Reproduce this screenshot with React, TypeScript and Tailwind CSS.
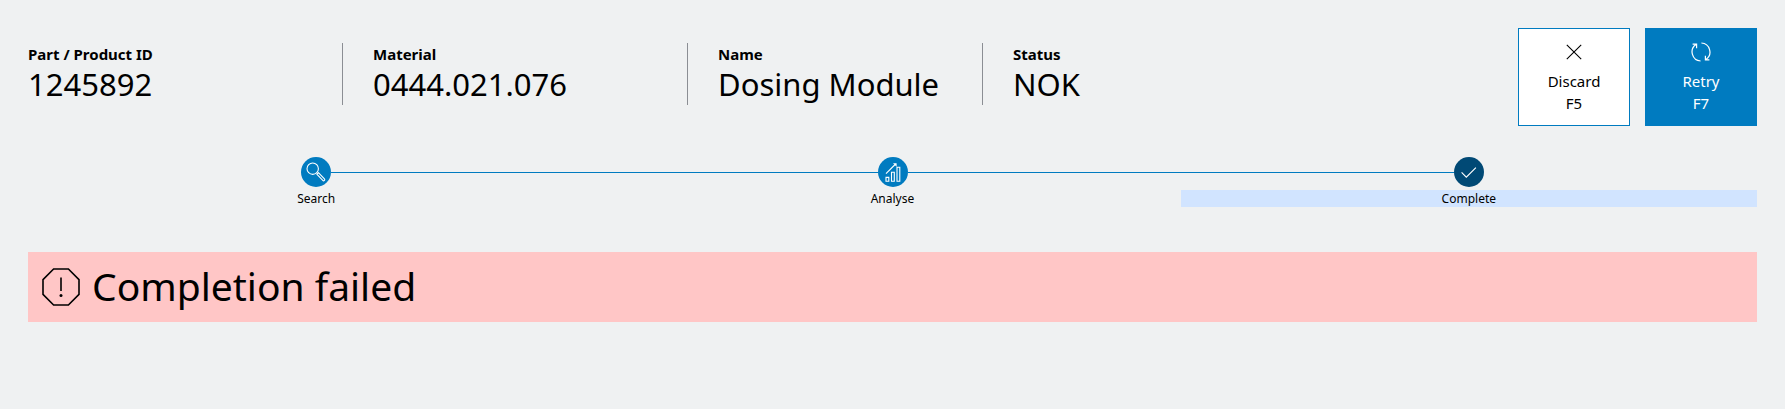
import React from 'react';

const fields = [
  { label: 'Part / Product ID', value: '1245892', className: 'w-[314px] pr-8' },
  { label: 'Material', value: '0444.021.076', className: 'w-[345px] border-l border-[#8b8e94] px-[30px]' },
  { label: 'Name', value: 'Dosing Module', className: 'w-[295px] border-l border-[#8b8e94] px-[30px]' },
  { label: 'Status', value: 'NOK', className: 'border-l border-[#8b8e94] px-[30px]' },
];

function SearchIcon() {
  return (
    <svg viewBox="0 0 30 30" className="h-full w-full" fill="none" stroke="white" strokeWidth="1.1">
      <circle cx="11.7" cy="11.7" r="5.7" />
      <path d="M15.8 17.2l1.6-1.6 6 6.2a1.1 1.1 0 0 1-1.6 1.6z" strokeLinejoin="round" />
    </svg>
  );
}

function AnalyseIcon() {
  return (
    <svg viewBox="0 0 30 30" className="h-full w-full" fill="none" stroke="white" strokeWidth="1.1">
      <path d="M8 20.4h2.8v3.8H8zM13.5 15.2h2.8v9h-2.8zM19 10.2h2.8v14H19z" />
      <path d="M8 16.6L17.6 7" />
      <path d="M15 6.2h3.6v3.6z" fill="white" stroke="none" />
    </svg>
  );
}

function CompleteIcon() {
  return (
    <svg viewBox="0 0 30 30" className="h-full w-full" fill="none" stroke="white" strokeWidth="1.1">
      <path d="M7.6 15.4l4.7 4.8 9.6-9.6" />
    </svg>
  );
}

const steps = [
  { label: 'Search', icon: <SearchIcon />, active: false },
  { label: 'Analyse', icon: <AnalyseIcon />, active: false },
  { label: 'Complete', icon: <CompleteIcon />, active: true },
];

export default function App() {
  return (
    <div className="min-h-screen bg-[#eff1f2] px-7 pt-7 pb-20 font-['Noto_Sans','Open_Sans',sans-serif] text-black">
      {/* Part details and actions */}
      <header className="flex items-start justify-between">
        <dl className="mt-[15px] flex">
          {fields.map((field) => (
            <div key={field.label} className={`h-[62px] ${field.className}`}>
              <dt className="text-[15px] leading-[22px] font-bold whitespace-nowrap">{field.label}</dt>
              <dd className="text-[31px] leading-[38px] whitespace-nowrap">{field.value}</dd>
            </div>
          ))}
        </dl>

        <div className="flex gap-[15px]">
          <button className="flex h-[98px] w-28 flex-col items-center border border-[#007bc0] bg-white pt-[13px] text-[15px] leading-[22px]">
            <svg viewBox="0 0 20 20" className="mb-2 h-5 w-5" fill="none" stroke="currentColor" strokeWidth="1.1">
              <path d="M2.8 2.8l14.4 14.4M17.2 2.8L2.8 17.2" />
            </svg>
            <span>Discard</span>
            <span>F5</span>
          </button>
          <button className="flex h-[98px] w-28 flex-col items-center border border-[#007bc0] bg-[#007bc0] pt-[13px] text-[15px] leading-[22px] text-white">
            <svg viewBox="0 0 20 20" className="mb-2 h-5 w-5" fill="none" stroke="currentColor" strokeWidth="1.2">
              <path d="M9.6 19A9 9 0 0 1 5 2.6M1.6 2.2h4v4M10.4 1A9 9 0 0 1 15 17.4M18.4 17.8h-4v-4" />
            </svg>
            <span>Retry</span>
            <span>F7</span>
          </button>
        </div>
      </header>

      {/* Progress */}
      <ol className="mt-[31px] grid grid-cols-3">
        {steps.map((step, index) => (
          <li key={step.label} aria-current={step.active ? 'step' : undefined}>
            <div className="flex items-center">
              <span className={`h-px flex-1 ${index > 0 ? 'bg-[#007bc0]' : ''}`} />
              <span className={`h-[30px] w-[30px] rounded-full ${step.active ? 'bg-[#004975]' : 'bg-[#007bc0]'}`}>
                {step.icon}
              </span>
              <span className={`h-px flex-1 ${index < steps.length - 1 ? 'bg-[#007bc0]' : ''}`} />
            </div>
            <p className={`mt-[3px] text-center text-[12px] leading-[17px] ${step.active ? 'bg-[#d1e4ff]' : ''}`}>{step.label}</p>
          </li>
        ))}
      </ol>

      {/* Result */}
      <div role="alert" className="mt-[45px] flex h-[70px] items-center bg-[#ffc6c6] px-[14px]">
        <svg viewBox="0 0 38 38" className="h-[38px] w-[38px]" fill="none" stroke="currentColor" strokeWidth="1.6">
          <path d="M11.6 1h14.8L37 11.6v14.8L26.4 37H11.6L1 26.4V11.6z" />
          <path d="M19 9.5v13.5" />
          <circle cx="19" cy="27.5" r="1.5" fill="currentColor" stroke="none" />
        </svg>
        <h1 className="ml-3 pb-[2px] text-[39px] leading-[48px]">Completion failed</h1>
      </div>
    </div>
  );
}
